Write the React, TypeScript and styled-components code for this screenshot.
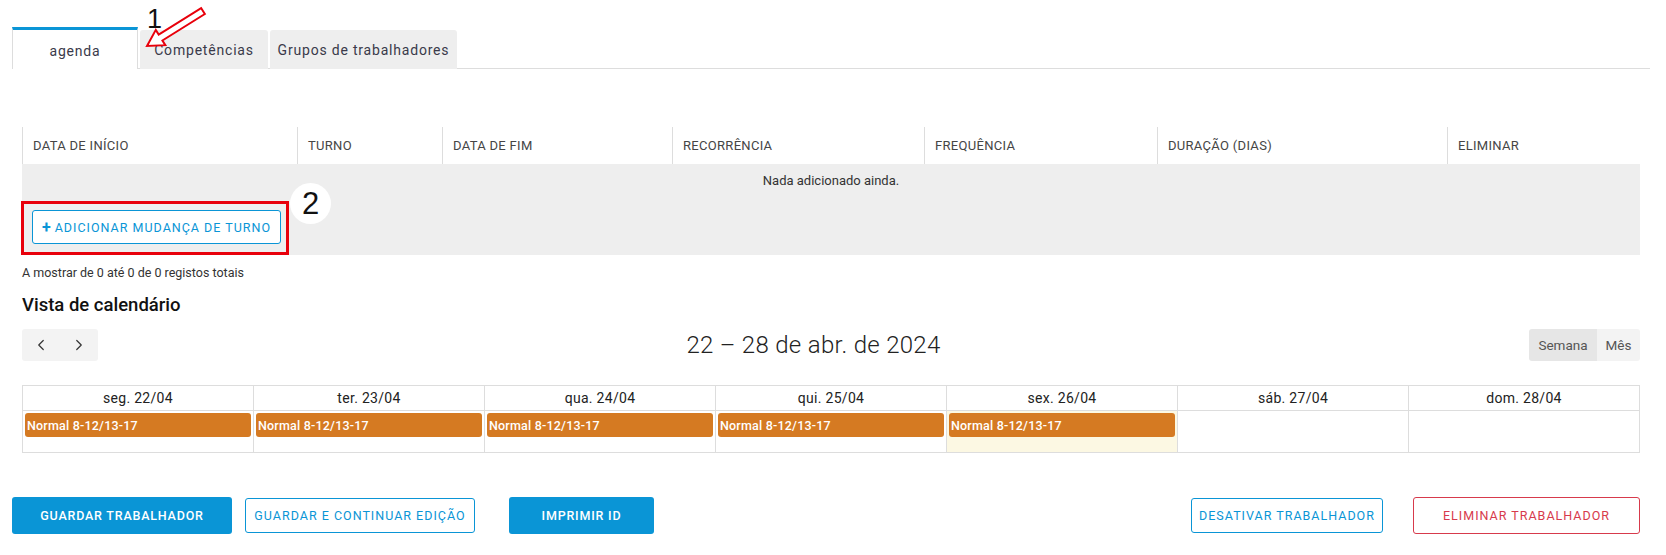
import React from 'react';
import styled, { createGlobalStyle } from 'styled-components';
import { ChevronLeft, ChevronRight } from 'lucide-react';

const GlobalStyle = createGlobalStyle`
  * { box-sizing: border-box; }
  body {
    margin: 0;
    background: #fff;
    font-family: Roboto, "Noto Sans", sans-serif;
    color: #333;
  }
`;

const BLUE = '#0a95d6';
const RED = '#d73a4c';

const Page = styled.div`
  position: relative;
  width: 1666px;
  height: 555px;
  padding: 27px 16px 0 12px;
`;

const TabBar = styled.div`
  display: flex;
  align-items: flex-end;
  gap: 2px;
  height: 42px;
  border-bottom: 1px solid #ddd;
`;

const Tab = styled.div<{ $active?: boolean; $w: number }>`
  width: ${(p) => p.$w}px;
  height: ${(p) => (p.$active ? 42 : 39)}px;
  margin-bottom: -1px;
  display: flex;
  align-items: center;
  justify-content: center;
  font-size: 14px;
  letter-spacing: 0.8px;
  color: #3a3a4a;
  background: ${(p) => (p.$active ? '#fff' : '#eee')};
  border-radius: ${(p) => (p.$active ? '0' : '3px 3px 0 0')};
  border-top: ${(p) => (p.$active ? `3px solid ${BLUE}` : 'none')};
  border-left: ${(p) => (p.$active ? '1px solid #ddd' : 'none')};
  border-right: ${(p) => (p.$active ? '1px solid #ddd' : 'none')};
  padding-top: ${(p) => (p.$active ? '2px' : '0')};
`;

const Section = styled.div`
  margin: 58px 10px 0;
`;

const COLS = '275px 145px 230px 252px 233px 290px 1fr';

const HeadRow = styled.div`
  display: grid;
  grid-template-columns: ${COLS};
  height: 37px;
  background: #fff;
`;

const HeadCell = styled.div`
  display: flex;
  align-items: center;
  padding-left: 10px;
  border-left: 1px solid #ddd;
  font-size: 13px;
  letter-spacing: 0.3px;
  color: #454545;
  text-transform: uppercase;
`;

const EmptyBody = styled.div`
  background: #eee;
  height: 91px;
  padding: 8px 10px 11px;
  display: flex;
  flex-direction: column;
  justify-content: space-between;
`;

const EmptyText = styled.div`
  text-align: center;
  font-size: 13px;
  line-height: 18px;
  color: #333;
`;

const OutlineButton = styled.button<{ $color?: string; $w: number; $h?: number }>`
  width: ${(p) => p.$w}px;
  height: ${(p) => p.$h ?? 35}px;
  background: #fff;
  border: 1px solid ${(p) => p.$color ?? BLUE};
  border-radius: 3px;
  color: ${(p) => p.$color ?? BLUE};
  font-family: inherit;
  font-size: 12.5px;
  letter-spacing: 1px;
  text-transform: uppercase;
  display: inline-flex;
  align-items: center;
  justify-content: center;
  gap: 4px;
  padding: 0;
`;

const SolidButton = styled.button<{ $w: number }>`
  width: ${(p) => p.$w}px;
  height: 37px;
  background: ${BLUE};
  border: none;
  border-radius: 3px;
  color: #fff;
  font-family: inherit;
  font-size: 12.5px;
  font-weight: 500;
  letter-spacing: 0.8px;
  text-transform: uppercase;
  padding: 0;
`;

const Plus = styled.span`
  font-weight: 700;
  font-size: 16px;
  letter-spacing: 0;
`;

const Summary = styled.div`
  font-size: 12.5px;
  color: #333;
  margin-top: 9px;
  line-height: 18px;
`;

const Heading = styled.h2`
  margin: 10px 0 0;
  font-size: 18.5px;
  font-weight: 500;
  color: #111;
  line-height: 26px;
`;

const Toolbar = styled.div`
  display: flex;
  justify-content: space-between;
  align-items: center;
  margin-top: 11px;
  height: 32px;
`;

const NavGroup = styled.div`
  display: flex;
  background: #f3f3f3;
  border-radius: 3px;
  height: 32px;
`;

const NavButton = styled.button`
  width: 38px;
  height: 32px;
  border: none;
  background: transparent;
  display: flex;
  align-items: center;
  justify-content: center;
  color: #333;
  padding: 0;
`;

const RangeTitle = styled.div`
  font-size: 24px;
  font-weight: 300;
  color: #222;
  letter-spacing: 0.3px;
`;

const ViewGroup = styled.div`
  display: flex;
  border-radius: 3px;
  overflow: hidden;
  height: 32px;
`;

const ViewButton = styled.div<{ $active?: boolean; $w: number }>`
  width: ${(p) => p.$w}px;
  display: flex;
  align-items: center;
  justify-content: center;
  font-size: 13.5px;
  color: #555;
  background: ${(p) => (p.$active ? '#e6e6e6' : '#f3f3f3')};
`;

const Calendar = styled.div`
  margin-top: 24px;
  display: grid;
  grid-template-columns: repeat(7, 1fr);
  border-top: 1px solid #ddd;
  border-left: 1px solid #ddd;
`;

const DayHead = styled.div`
  height: 25px;
  display: flex;
  align-items: center;
  justify-content: center;
  font-size: 14px;
  letter-spacing: 0.3px;
  color: #222;
  border-right: 1px solid #ddd;
  border-bottom: 1px solid #ddd;
`;

const DayCell = styled.div<{ $today?: boolean }>`
  height: 42px;
  padding: 2px 2px 0;
  background: ${(p) => (p.$today ? '#fcf8e3' : '#fff')};
  border-right: 1px solid #ddd;
  border-bottom: 1px solid #ddd;
`;

const Event = styled.div`
  height: 24px;
  background: #d57a22;
  border-radius: 3px;
  color: #fff;
  font-size: 12.5px;
  font-weight: 500;
  letter-spacing: 0.2px;
  padding-left: 2px;
  display: flex;
  align-items: center;
  white-space: nowrap;
  overflow: hidden;
`;

const Footer = styled.div`
  display: flex;
  justify-content: space-between;
  align-items: center;
  margin-top: 44px;
  padding-right: 10px;
`;

const ButtonGroup = styled.div<{ $gap: number }>`
  display: flex;
  align-items: center;
  gap: ${(p) => p.$gap}px;
`;

const Gap = styled.span<{ $w: number }>`
  display: inline-block;
  width: ${(p) => p.$w}px;
`;

/* annotations drawn over the screenshot */
const Marker = styled.div`
  position: absolute;
  left: 147px;
  top: 4px;
  font-family: "Liberation Sans", Arial, sans-serif;
  font-size: 27px;
  color: #111;
  line-height: 30px;
`;

const ArrowSvg = styled.svg`
  position: absolute;
  left: 0;
  top: 0;
  pointer-events: none;
`;

const Highlight = styled.div`
  position: absolute;
  left: 21px;
  top: 201px;
  width: 268px;
  height: 54px;
  border: 3px solid #e8000b;
  pointer-events: none;
`;

const Badge = styled.div`
  position: absolute;
  left: 290px;
  top: 183px;
  width: 41px;
  height: 41px;
  border-radius: 50%;
  background: #fff;
  display: flex;
  align-items: center;
  justify-content: center;
  font-family: "Liberation Sans", Arial, sans-serif;
  font-size: 31px;
  color: #111;
`;

const heads = ['Data de início', 'Turno', 'Data de fim', 'Recorrência', 'Frequência', 'Duração (dias)', 'Eliminar'];
const days = [
  { label: 'seg. 22/04', event: true },
  { label: 'ter. 23/04', event: true },
  { label: 'qua. 24/04', event: true },
  { label: 'qui. 25/04', event: true },
  { label: 'sex. 26/04', event: true, today: true },
  { label: 'sáb. 27/04' },
  { label: 'dom. 28/04' },
];

export default function App() {
  return (
    <>
      <GlobalStyle />
      <Page>
        <TabBar>
          <Tab $active $w={126}>agenda</Tab>
          <Tab $w={128}>Competências</Tab>
          <Tab $w={187}>Grupos de trabalhadores</Tab>
        </TabBar>

        <Section>
          <HeadRow>
            {heads.map((h) => (
              <HeadCell key={h}>{h}</HeadCell>
            ))}
          </HeadRow>
          <EmptyBody>
            <EmptyText>Nada adicionado ainda.</EmptyText>
            <OutlineButton $w={249} $h={34}>
              <Plus>+</Plus>ADICIONAR MUDANÇA DE TURNO
            </OutlineButton>
          </EmptyBody>
          <Summary>A mostrar de 0 até 0 de 0 registos totais</Summary>

          <Heading>Vista de calendário</Heading>
          <Toolbar>
            <NavGroup>
              <NavButton>
                <ChevronLeft size={18} strokeWidth={1.6} />
              </NavButton>
              <NavButton>
                <ChevronRight size={18} strokeWidth={1.6} />
              </NavButton>
            </NavGroup>
            <RangeTitle>22 – 28 de abr. de 2024</RangeTitle>
            <ViewGroup>
              <ViewButton $active $w={68}>Semana</ViewButton>
              <ViewButton $w={43}>Mês</ViewButton>
            </ViewGroup>
          </Toolbar>

          <Calendar>
            {days.map((d) => (
              <DayHead key={d.label}>{d.label}</DayHead>
            ))}
            {days.map((d) => (
              <DayCell key={d.label} $today={d.today}>
                {d.event && <Event>Normal 8-12/13-17</Event>}
              </DayCell>
            ))}
          </Calendar>
        </Section>

        <Footer>
          <ButtonGroup $gap={13}>
            <SolidButton $w={220}>Guardar trabalhador</SolidButton>
            <OutlineButton $w={230}>Guardar e continuar edição</OutlineButton>
            <Gap $w={8} />
            <SolidButton $w={145}>Imprimir ID</SolidButton>
          </ButtonGroup>
          <ButtonGroup $gap={30}>
            <OutlineButton $w={192}>Desativar trabalhador</OutlineButton>
            <OutlineButton $w={227} $h={37} $color={RED}>Eliminar trabalhador</OutlineButton>
          </ButtonGroup>
        </Footer>

        <Marker>1</Marker>
        <ArrowSvg width="260" height="70">
          <polygon
            points="0,0 16,-9 16,-3.5 66,-3.5 66,3.5 16,3.5 16,9"
            transform="translate(147 46) rotate(-32)"
            fill="#fff"
            stroke="#e8000b"
            strokeWidth="2"
            strokeLinejoin="miter"
          />
        </ArrowSvg>
        <Highlight />
        <Badge>2</Badge>
      </Page>
    </>
  );
}
